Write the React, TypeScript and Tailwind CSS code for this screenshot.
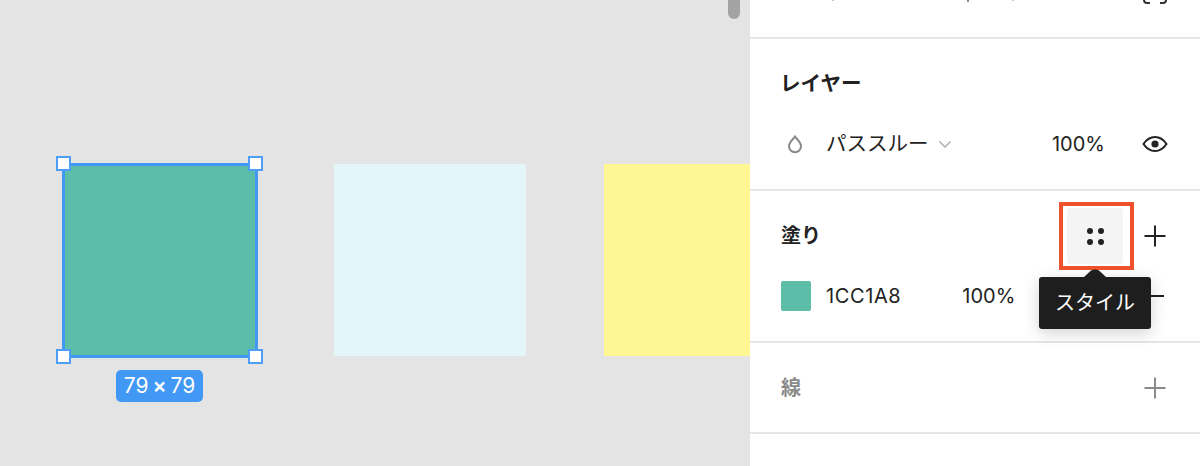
import React from "react";

const font = { fontFamily: '"Inter","Noto Sans CJK JP","Liberation Sans",sans-serif' };

function Handle({ className }: { className: string }) {
  return <div className={`absolute w-[15px] h-[15px] bg-white border-2 border-[#4c9ff5] ${className}`} />;
}

function Plus({ color = "#222222" }: { color?: string }) {
  return (
    <svg width="22" height="22" viewBox="0 0 22 22" fill="none" stroke={color} strokeWidth="2">
      <path d="M11 0.5V21.5M0.5 11H21.5" />
    </svg>
  );
}

export default function App() {
  return (
    <div className="flex w-[1200px] h-[466px] overflow-hidden bg-[#e4e4e4]" style={font}>
      <div className="relative w-[750px] h-full shrink-0 overflow-hidden bg-[#e4e4e4]">
        <div className="absolute left-[728px] top-[-10px] w-[12px] h-[29px] rounded-full bg-[#a3a3a3]" />
        <div className="absolute left-[62px] top-[163px] w-[196px] h-[195px] bg-[#5cbea9] border-[3px] border-[#4299f5]" />
        <Handle className="left-[56px] top-[156px]" />
        <Handle className="left-[248px] top-[156px]" />
        <Handle className="left-[56px] top-[349px]" />
        <Handle className="left-[248px] top-[349px]" />
        <div className="absolute left-[116px] top-[370px] w-[87px] h-[32px] rounded-[5px] bg-[#4299f5] text-white text-[21px] leading-[32px] flex justify-center whitespace-nowrap">
          <span>79</span>
          <span className="mx-[4px] font-semibold">×</span>
          <span>79</span>
        </div>
        <div className="absolute left-[334px] top-[164px] w-[192px] h-[192px] bg-[#e3f5f9]" />
        <div className="absolute left-[604px] top-[164px] w-[146px] h-[192px] bg-[#fff793]" />
      </div>

      <div className="w-[450px] h-full shrink-0 bg-white text-[#222222] flex flex-col">
        <div className="h-[39px] shrink-0 border-b-2 border-[#e6e6e6] relative">
          <span className="absolute left-[82px] top-0 w-[2px] h-[1px] bg-[#c8c8c8]" />
          <span className="absolute left-[217px] top-0 w-[2px] h-[2px] bg-[#8a8a8a]" />
          <span className="absolute left-[262px] top-0 w-[2px] h-[1px] bg-[#c8c8c8]" />
          <svg className="absolute left-[393px] top-0" width="24" height="4" viewBox="0 0 24 4" fill="none" stroke="#333333" strokeWidth="2">
            <path d="M1 0C1 2 2 3 4 3H7M17 3H20C22 3 23 2 23 0" />
          </svg>
        </div>

        <section className="h-[152px] shrink-0 border-b-2 border-[#e6e6e6] pl-[32px] pr-[32px]">
          <h2 className="h-[30px] mt-[30px] -ml-[2px] text-[20.500px] leading-[30px] font-bold">レイヤー</h2>
          <div className="mt-[30px] h-[30px] flex items-center">
            <svg width="18" height="20" viewBox="0 0 18 20" fill="none" stroke="#8a8a8a" strokeWidth="2" className="ml-[4px]">
              <path d="M9 2.500C7 5.500 3 8.200 3 12.200A6 6 0 0 0 15 12.200C15 8.200 11 5.500 9 2.500Z" />
            </svg>
            <span className="ml-[22px] whitespace-nowrap text-[20.500px]">パススルー</span>
            <svg width="14" height="9" viewBox="0 0 14 9" fill="none" stroke="#b5b5b5" strokeWidth="1.600" className="ml-[9px]">
              <path d="M1.500 1.500L7 7L12.500 1.500" />
            </svg>
            <span className="ml-auto text-[20px]">100%</span>
            <svg width="26" height="18" viewBox="0 0 26 18" fill="none" className="ml-[37px]">
              <path d="M1.500 9C4.500 4.500 8.500 2 13 2S21.500 4.500 24.500 9C21.500 13.500 17.500 16 13 16S4.500 13.500 1.500 9Z" stroke="#222222" strokeWidth="2" />
              <circle cx="13" cy="9" r="3.600" fill="#222222" />
            </svg>
          </div>
        </section>

        <section className="h-[152px] shrink-0 border-b-2 border-[#e6e6e6] pl-[31px] pr-[34px] relative">
          <div className="mt-[30px] h-[30px] flex items-center justify-between">
            <h2 className="text-[20px] font-bold">塗り</h2>
            <Plus />
          </div>
          <div className="mt-[30px] h-[30px] flex items-center text-[20px]">
            <div className="w-[30px] h-[30px] rounded-[2px] bg-[#5cbea9]" />
            <span className="ml-[15px] tracking-[0.6px]">1CC1A8</span>
            <span className="ml-[61px]">100%</span>
            <div className="ml-auto w-[18px] h-[2px] bg-[#222222] mr-[2px]" />
          </div>

          <div className="absolute left-[309px] top-[11px] w-[75px] h-[68px] border-[4px] border-[#f0532b] bg-white pl-[4px] pr-[7px] py-[2px]">
            <div className="w-full h-full rounded-[3px] bg-[#f4f4f4] flex items-center justify-center">
              <div className="grid grid-cols-[6px_6px] grid-rows-[6px_6px] gap-[5px]">
                <span className="rounded-full bg-[#222222]" />
                <span className="rounded-full bg-[#222222]" />
                <span className="rounded-full bg-[#222222]" />
                <span className="rounded-full bg-[#222222]" />
              </div>
            </div>
          </div>

          <div className="absolute left-[289px] top-[86px] w-[112px] h-[52px] rounded-[3px] bg-[#1e1e1e] text-white text-[20px] flex items-center justify-center shadow-[0_4px_16px_rgba(0,0,0,0.18)]">
            スタイル
          </div>
          <svg className="absolute left-[332px] top-[78px]" width="26" height="9" viewBox="0 0 26 9">
            <path d="M1 9L9 1.500Q13 -0.500 17 1.500L25 9Z" fill="#1e1e1e" />
          </svg>
        </section>

        <section className="h-[91px] shrink-0 border-b-2 border-[#e6e6e6] pl-[31px] pr-[34px] flex items-center justify-between">
          <h2 className="text-[20px] font-bold text-[#8a8a8a]">線</h2>
          <Plus color="#8a8a8a" />
        </section>
      </div>
    </div>
  );
}
